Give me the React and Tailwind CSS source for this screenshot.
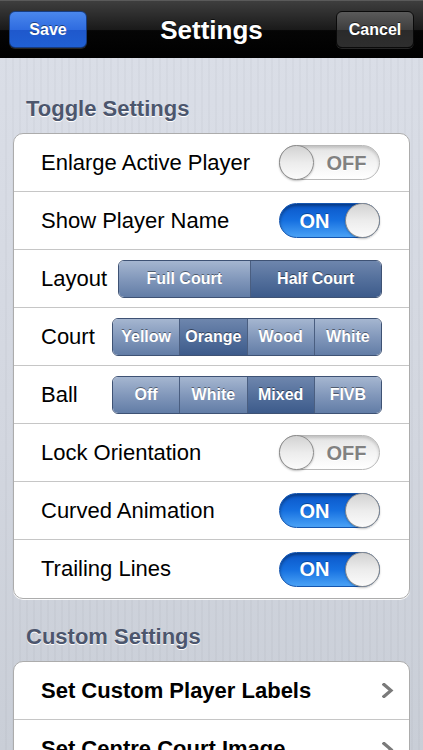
import React from "react";

const FONT = { fontFamily: '"Liberation Sans", Arial, Helvetica, sans-serif' };

function Switch({ on }) {
  if (on) {
    return (
      <div className="flex items-center w-[101px] h-[35px] rounded-full border border-[#1556b0] bg-[linear-gradient(180deg,#0a56c8_0%,#1670e0_50%,#4aa2f6_100%)] shadow-[inset_0_2px_3px_rgba(0,0,0,0.35)] mr-[2px]">
        <span className="flex-1 text-center text-white font-bold text-[20px] leading-none pl-[4px] [text-shadow:0_-1px_0_rgba(0,0,0,0.3)]">ON</span>
        <div className="w-[35px] h-[35px] -my-[1px] -mr-[1px] rounded-full border border-[#8c8c8c] bg-[linear-gradient(180deg,#d2d2d2_0%,#ececec_50%,#fbfbfb_100%)] shadow-[0_1px_2px_rgba(0,0,0,0.25)]" />
      </div>
    );
  }
  return (
    <div className="flex items-center w-[101px] h-[35px] rounded-full border border-[#b9b9b9] bg-[linear-gradient(180deg,#e2e2e2_0%,#f3f3f3_50%,#ffffff_100%)] shadow-[inset_0_2px_3px_rgba(0,0,0,0.15)] mr-[2px]">
      <div className="w-[35px] h-[35px] -my-[1px] -ml-[1px] rounded-full border border-[#8c8c8c] bg-[linear-gradient(180deg,#d2d2d2_0%,#ececec_50%,#fbfbfb_100%)] shadow-[0_1px_2px_rgba(0,0,0,0.25)]" />
      <span className="flex-1 text-center text-[#818181] font-bold text-[20px] leading-none [text-shadow:0_1px_0_#fff]">OFF</span>
    </div>
  );
}

function Segmented({ items, selected, widthClass }) {
  return (
    <div className={"flex h-[38px] rounded-[6px] border border-[#3e5274] overflow-hidden shadow-[0_1px_0_rgba(255,255,255,0.8)] " + widthClass}>
      {items.map((it, i) => (
        <div
          key={it}
          className={
            "flex-1 flex items-center justify-center text-white font-bold text-[16px] leading-none [text-shadow:0_-1px_0_rgba(0,0,0,0.45)] " +
            (i > 0 ? "border-l border-[#4a5e80] " : "") +
            (it === selected
              ? "bg-[linear-gradient(180deg,#6e86ad_0%,#54709c_50%,#3d5b8b_100%)]"
              : "bg-[linear-gradient(180deg,#a5b6d0_0%,#8298bb_50%,#627da6_100%)]")
          }
        >
          {it}
        </div>
      ))}
    </div>
  );
}

function Row({ children, last }) {
  return (
    <div className={"flex items-center justify-between h-[58px] pl-[27px] pr-[27px] " + (last ? "" : "border-b border-[#c6c6c6]")}>
      {children}
    </div>
  );
}

function Label({ children }) {
  return <span className="text-[22px] text-black leading-none">{children}</span>;
}

function Header({ children }) {
  return (
    <div className="h-[26px] leading-[26px] pl-[26px] text-[22px] font-bold text-[#4c566d] [text-shadow:0_1px_0_#ffffff]">
      {children}
    </div>
  );
}

function Chevron() {
  return (
    <svg width="12" height="15" viewBox="0 0 12 15" className="mr-[-12px]">
      <polyline points="2,1.5 9,7.5 2,13.5" fill="none" stroke="#7a7a7a" strokeWidth="3.2" strokeLinecap="square" strokeLinejoin="miter" />
    </svg>
  );
}

export default function App() {
  return (
    <div style={FONT} className="w-[423px] h-[750px] overflow-hidden bg-[repeating-linear-gradient(90deg,rgba(255,255,255,0)_0px,rgba(255,255,255,0)_5px,rgba(0,0,0,0.025)_5px,rgba(0,0,0,0.025)_7px),linear-gradient(180deg,#dbdfe8_0%,#d2d6df_60%,#c9ced7_100%)]">
      {/* Nav bar */}
      <div className="relative flex items-center justify-between h-[58px] px-[9px] border-t border-[#5a5a5a] bg-[linear-gradient(180deg,#3e3e3e_0%,#1a1a1a_50%,#050505_52%,#000000_100%)]">
        <div className="flex items-center justify-center w-[78px] h-[37px] rounded-[6px] border border-[#173c80] bg-[linear-gradient(180deg,#4a87ec_0%,#2f6ce0_50%,#1f58cc_52%,#2060d4_100%)] shadow-[0_1px_0_rgba(255,255,255,0.15)] text-white font-bold text-[16px] [text-shadow:0_-1px_0_rgba(0,0,0,0.45)]">
          Save
        </div>
        <div className="text-white font-bold text-[26px] leading-none [text-shadow:0_-1px_0_rgba(0,0,0,0.6)]">Settings</div>
        <div className="flex items-center justify-center w-[78px] h-[37px] rounded-[6px] border border-[#0a0a0a] bg-[linear-gradient(180deg,#5a5a5a_0%,#3e3e3e_50%,#2a2a2a_52%,#2e2e2e_100%)] shadow-[0_1px_0_rgba(255,255,255,0.15)] text-white font-bold text-[16px] [text-shadow:0_-1px_0_rgba(0,0,0,0.6)]">
          Cancel
        </div>
      </div>

      <div className="pt-[38px]">
        <Header>Toggle Settings</Header>
        <div className="mt-[11px] mx-[13px] rounded-[10px] border border-[#acacac] bg-white shadow-[0_1px_0_rgba(255,255,255,0.9)] overflow-hidden">
          <Row>
            <Label>Enlarge Active Player</Label>
            <Switch on={false} />
          </Row>
          <Row>
            <Label>Show Player Name</Label>
            <Switch on={true} />
          </Row>
          <Row>
            <Label>Layout</Label>
            <Segmented items={["Full Court", "Half Court"]} selected="Half Court" widthClass="w-[264px]" />
          </Row>
          <Row>
            <Label>Court</Label>
            <Segmented items={["Yellow", "Orange", "Wood", "White"]} selected="Orange" widthClass="w-[270px]" />
          </Row>
          <Row>
            <Label>Ball</Label>
            <Segmented items={["Off", "White", "Mixed", "FIVB"]} selected="Mixed" widthClass="w-[270px]" />
          </Row>
          <Row>
            <Label>Lock Orientation</Label>
            <Switch on={false} />
          </Row>
          <Row>
            <Label>Curved Animation</Label>
            <Switch on={true} />
          </Row>
          <Row last>
            <Label>Trailing Lines</Label>
            <Switch on={true} />
          </Row>
        </div>

        <div className="pt-[25px]">
          <Header>Custom Settings</Header>
        </div>
        <div className="mt-[11px] mx-[13px] rounded-[10px] border border-[#acacac] bg-white overflow-hidden">
          <Row>
            <span className="text-[22px] font-bold text-black leading-none">Set Custom Player Labels</span>
            <Chevron />
          </Row>
          <Row last>
            <span className="text-[22px] font-bold text-black leading-none">Set Centre Court Image</span>
            <Chevron />
          </Row>
        </div>
      </div>
    </div>
  );
}
